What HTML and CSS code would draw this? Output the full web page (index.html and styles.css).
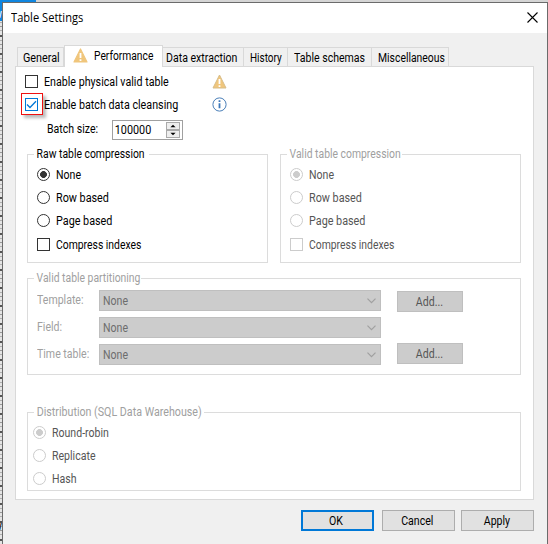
FILE: index.html
```html
<!DOCTYPE html>
<html lang="en">
<head>
<meta charset="utf-8">
<title>Table Settings</title>
<link rel="stylesheet" href="styles.css">
</head>
<body>
<div class="desktop">
<div class="backdrop"><div class="ribbon"></div><span class="peek peek-top">w</span><span class="peek peek-bottom">w</span></div>
<main class="window">
  <header class="titlebar"><h1>Table Settings</h1>
    <svg class="close" width="11" height="11" viewBox="0 0 11 11"><path d="M.5.5l10 10M10.5.5l-10 10" stroke="#000" stroke-width="1.1" fill="none"/></svg>
  </header>
  <nav class="tabs">
    <div class="tab general"><span>General</span></div>
    <div class="tab active">
      <svg width="15" height="15" viewBox="0 0 15 15"><path d="M7.5 1L14 14H1z" fill="#f0c67c" stroke="#f0c67c" stroke-width="1.2" stroke-linejoin="round"/><path d="M7.5 5v5M7.5 11.2v1.8" stroke="#fff" stroke-width="1.8"/></svg>
      <span>Performance</span></div>
    <div class="tab extraction"><span>Data extraction</span></div>
    <div class="tab history"><span>History</span></div>
    <div class="tab schemas"><span>Table schemas</span></div>
    <div class="tab misc"><span>Miscellaneous</span></div>
  </nav>
  <section class="panel">
    <div class="option"><i class="check"></i><span class="t-physical">Enable physical valid table</span>
      <svg class="hint" width="15" height="15" viewBox="0 0 15 15"><path d="M7.5 1L14 14H1z" fill="#f0c67c" stroke="#d8bd88" stroke-width="1" stroke-linejoin="round"/><path d="M7.5 5v5M7.5 11.2v1.8" stroke="#fff" stroke-width="1.8"/></svg>
    </div>
    <div class="option"><b class="marker"></b><i class="check on"><svg width="11" height="11" viewBox="0 0 11 11"><path d="M1 5.5l3 3L10 2.3" fill="none" stroke="#0078d7" stroke-width="1.3"/></svg></i><span class="t-cleansing">Enable batch data cleansing</span>
      <svg class="hint" width="15" height="15" viewBox="0 0 15 15"><circle cx="7.5" cy="7.5" r="6.6" fill="#fff" stroke="#4a7fb8"/><path d="M7.5 6.3v5M7.5 3.3v1.8" stroke="#3c78ba" stroke-width="1.8"/></svg>
    </div>
    <div class="batch"><span>Batch size:</span>
      <div class="spin"><span>100000</span><div class="arrows"><svg viewBox="0 0 12 7"><path d="M3 5h6L6 2z"/></svg><svg viewBox="0 0 12 7"><path d="M3 2h6L6 5z"/></svg></div></div>
    </div>
    <div class="pair">
      <fieldset class="group compression"><legend>Raw table compression</legend>
        <div class="choice"><i class="radio on"></i><span class="t-none">None</span></div>
        <div class="choice"><i class="radio"></i><span class="t-short">Row based</span></div>
        <div class="choice"><i class="radio"></i><span class="t-short">Page based</span></div>
        <div class="choice last"><i class="check"></i><span class="t-compress">Compress indexes</span></div>
      </fieldset>
      <fieldset class="group compression disabled"><legend>Valid table compression</legend>
        <div class="choice"><i class="radio on"></i><span class="t-none">None</span></div>
        <div class="choice"><i class="radio"></i><span class="t-short">Row based</span></div>
        <div class="choice"><i class="radio"></i><span class="t-short">Page based</span></div>
        <div class="choice last"><i class="check"></i><span class="t-compress">Compress indexes</span></div>
      </fieldset>
    </div>
    <fieldset class="group partitioning disabled"><legend class="t-part">Valid table partitioning</legend>
      <div class="row"><label>Template:</label><div class="combo"><span class="t-none">None</span><svg width="9" height="6" viewBox="0 0 9 6"><path d="M.5.7l4 4 4-4"/></svg></div><div class="add"><span>Add...</span></div></div>
      <div class="row"><label>Field:</label><div class="combo"><span class="t-none">None</span><svg width="9" height="6" viewBox="0 0 9 6"><path d="M.5.7l4 4 4-4"/></svg></div></div>
      <div class="row time"><label>Time table:</label><div class="combo"><span class="t-none">None</span><svg width="9" height="6" viewBox="0 0 9 6"><path d="M.5.7l4 4 4-4"/></svg></div><div class="add"><span>Add...</span></div></div>
    </fieldset>
    <fieldset class="group distribution disabled"><legend class="t-dist">Distribution (SQL Data Warehouse)</legend>
      <div class="choice"><i class="radio on"></i><span>Round-robin</span></div>
      <div class="choice"><i class="radio"></i><span>Replicate</span></div>
      <div class="choice"><i class="radio"></i><span>Hash</span></div>
    </fieldset>
  </section>
  <footer class="actions"><div class="button primary"><span>OK</span></div><div class="button"><span>Cancel</span></div><div class="button apply"><span>Apply</span></div></footer>
</main>
</div>
</body>
</html>
```
FILE: styles.css
```css
* { box-sizing: border-box; }
body { margin: 0; font: 12px/14px Roboto, "Liberation Sans", sans-serif; color: #000; overflow: hidden; }
span, legend, label { display: inline-block; white-space: nowrap; transform: scaleX(.88); transform-origin: left; }
.desktop { position: relative; width: 548px; height: 544px; padding: 2px 0 0 2px; background: #d5d5d5; overflow: hidden; }
.backdrop { position: absolute; left: 0; top: 0; width: 36px; height: 544px; overflow: hidden; background: repeating-linear-gradient(#555 0 1px, #e4e4e4 1px 4px, #b0b0b0 4px 5px, #e4e4e4 5px 8px, #999 8px 9px, #e4e4e4 9px 12px, #b0b0b0 12px 13px, #e4e4e4 13px 17px, #555 17px 18px); }
.ribbon { height: 21px; background: #0f86e0; }
.peek { position: absolute; left: -6px; }
.peek-top { top: 7px; color: #fff; }
.peek-bottom { top: 519px; }
.window { position: relative; display: flex; flex-direction: column; width: 546px; height: 544px; border: 1px solid #6b6b6b; border-bottom: 0; background: #f0f0f0; }
.titlebar { display: flex; justify-content: space-between; height: 30px; padding: 8px 9px 0 8px; background: #fff; }
h1 { margin: 0; font: 12.5px/14px "Open Sans", sans-serif; transform: scaleX(.89); transform-origin: left; }
.close { margin-top: 1px; }
.tabs { position: relative; z-index: 1; display: flex; align-items: flex-end; height: 34px; margin: 0 0 -1px 14px; }
.tab { height: 20px; padding: 3px 0 0 5px; border: 1px solid #d9d9d9; border-left: 0; }
.tab.general { width: 47px; border-left: 1px solid #d9d9d9; }
.general span { transform: scaleX(.9); }
.tab.active { display: flex; gap: 6px; width: 99px; height: 22px; padding: 3px 0 0 8px; background: #fff; border-left: 1px solid #d9d9d9; border-bottom: 0; }
.tab.active svg { flex: none; margin-top: -1px; }
.active span { transform: scaleX(.855); }
.tab.extraction { width: 81px; padding-left: 3px; }
.tab.history { width: 44px; padding-left: 6px; }
.history span { transform: scaleX(.83); }
.tab.schemas { width: 84px; padding-left: 6px; }
.tab.misc { width: 77px; padding-left: 6px; }
.misc span { transform: scaleX(.865); }
.panel { width: 519px; height: 434px; margin-left: 12px; padding: 7px 11px 0 9px; border: 1px solid #d9d9d9; background: #fff; }
.option { position: relative; display: flex; align-items: center; height: 15px; margin-bottom: 8px; }
.option > span { width: 168px; margin-left: 6px; }
.t-physical { transform: scaleX(.89); }
.option > .t-cleansing { transform: scaleX(.895); }
.check { position: relative; display: block; flex: none; width: 13px; height: 13px; border: 1px solid #333; background: #fff; }
.check.on { border-color: #0078d7; }
.check svg { display: block; }
.marker { position: absolute; left: -4px; top: -4px; width: 22px; height: 22px; border: 1px solid #f01010; box-shadow: 3px 3px 3px #bbb; background: #fff; }
.batch { display: flex; height: 20px; margin-left: 22px; }
.batch > span { width: 65px; padding-top: 2px; }
.spin { display: flex; justify-content: space-between; width: 71px; height: 20px; border: 1px solid #a0a0a0; }
.spin > span { padding: 2px 0 0 2px; transform: scaleX(.9); }
.arrows { flex: none; width: 16px; padding: 1px 1px 0 0; }
.arrows svg { display: block; width: 14px; height: 8px; border: 1px solid #aaa; background: #eee; }
.pair { display: flex; gap: 12px; margin: 7px 0 0 2px; }
.group { margin: 0; padding: 0; border: 1px solid #dcdcdc; min-width: 0; }
legend { display: block; width: 115px; height: 14px; margin-left: 6px; padding: 0 0 0 3px; transform: scaleX(.865); }
legend.t-part { width: 107px; }
legend.t-dist { width: 170px; transform: scaleX(.89); }
.compression { width: 241px; height: 116px; }
.choice { display: flex; align-items: center; height: 23px; margin-left: 9px; }
.group legend + .choice { margin-top: 2px; }
.choice span { margin-left: 6px; }
.choice .t-short { transform: scaleX(.9); }
.choice .t-compress { transform: scaleX(.865); }
.compression .last { margin-top: 1px; }
.radio { width: 13px; height: 13px; border: 1px solid #333; border-radius: 50%; background: #fff; }
.radio.on { background: radial-gradient(circle, #333 0 3.1px, #fff 3.7px); }
.disabled legend, .disabled label { color: #a0a0a0; }
.disabled .choice { color: #555; }
.disabled .radio, .disabled .check { border-color: #ccc; }
.disabled .radio.on { background: radial-gradient(circle, #ccc 0 3.1px, #fff 3.7px); }
.partitioning { width: 494px; height: 104px; margin: 8px 0 0 2px; }
.row { display: flex; height: 21px; margin: 0 0 6px 9px; }
.partitioning legend + .row { margin-top: 5px; }
.row label { width: 62px; padding-top: 3px; }
.combo { display: flex; justify-content: space-between; width: 282px; height: 21px; padding: 3px 4px 0 3px; border: 1px solid #bfbfbf; background: #ccc; color: #6d6d6d; }
.combo svg { margin-top: 4px; fill: none; stroke: #a0a0a0; stroke-width: 1.2; }
.add { width: 66px; height: 21px; margin: 1px 0 0 16px; padding: 3px 2px 0 0; border: 1px solid #bfbfbf; background: #ccc; color: #555; text-align: center; }
.add span, .button span { transform-origin: center; }
.time .add { margin-top: -1px; }
.distribution { width: 494px; height: 86px; margin: 30px 0 0 2px; }
.distribution .choice { margin-left: 5px; }
.actions { display: flex; gap: 8px; margin: 10px 0 0 298px; }
.button { width: 73px; height: 21px; padding: 3px 3px 0 0; border: 1px solid #adadad; background: #e1e1e1; text-align: center; }
.button.primary { border: 2px solid #0078d7; padding-top: 2px; }
.button.apply { margin-left: -2px; padding-right: 1px; }
```
